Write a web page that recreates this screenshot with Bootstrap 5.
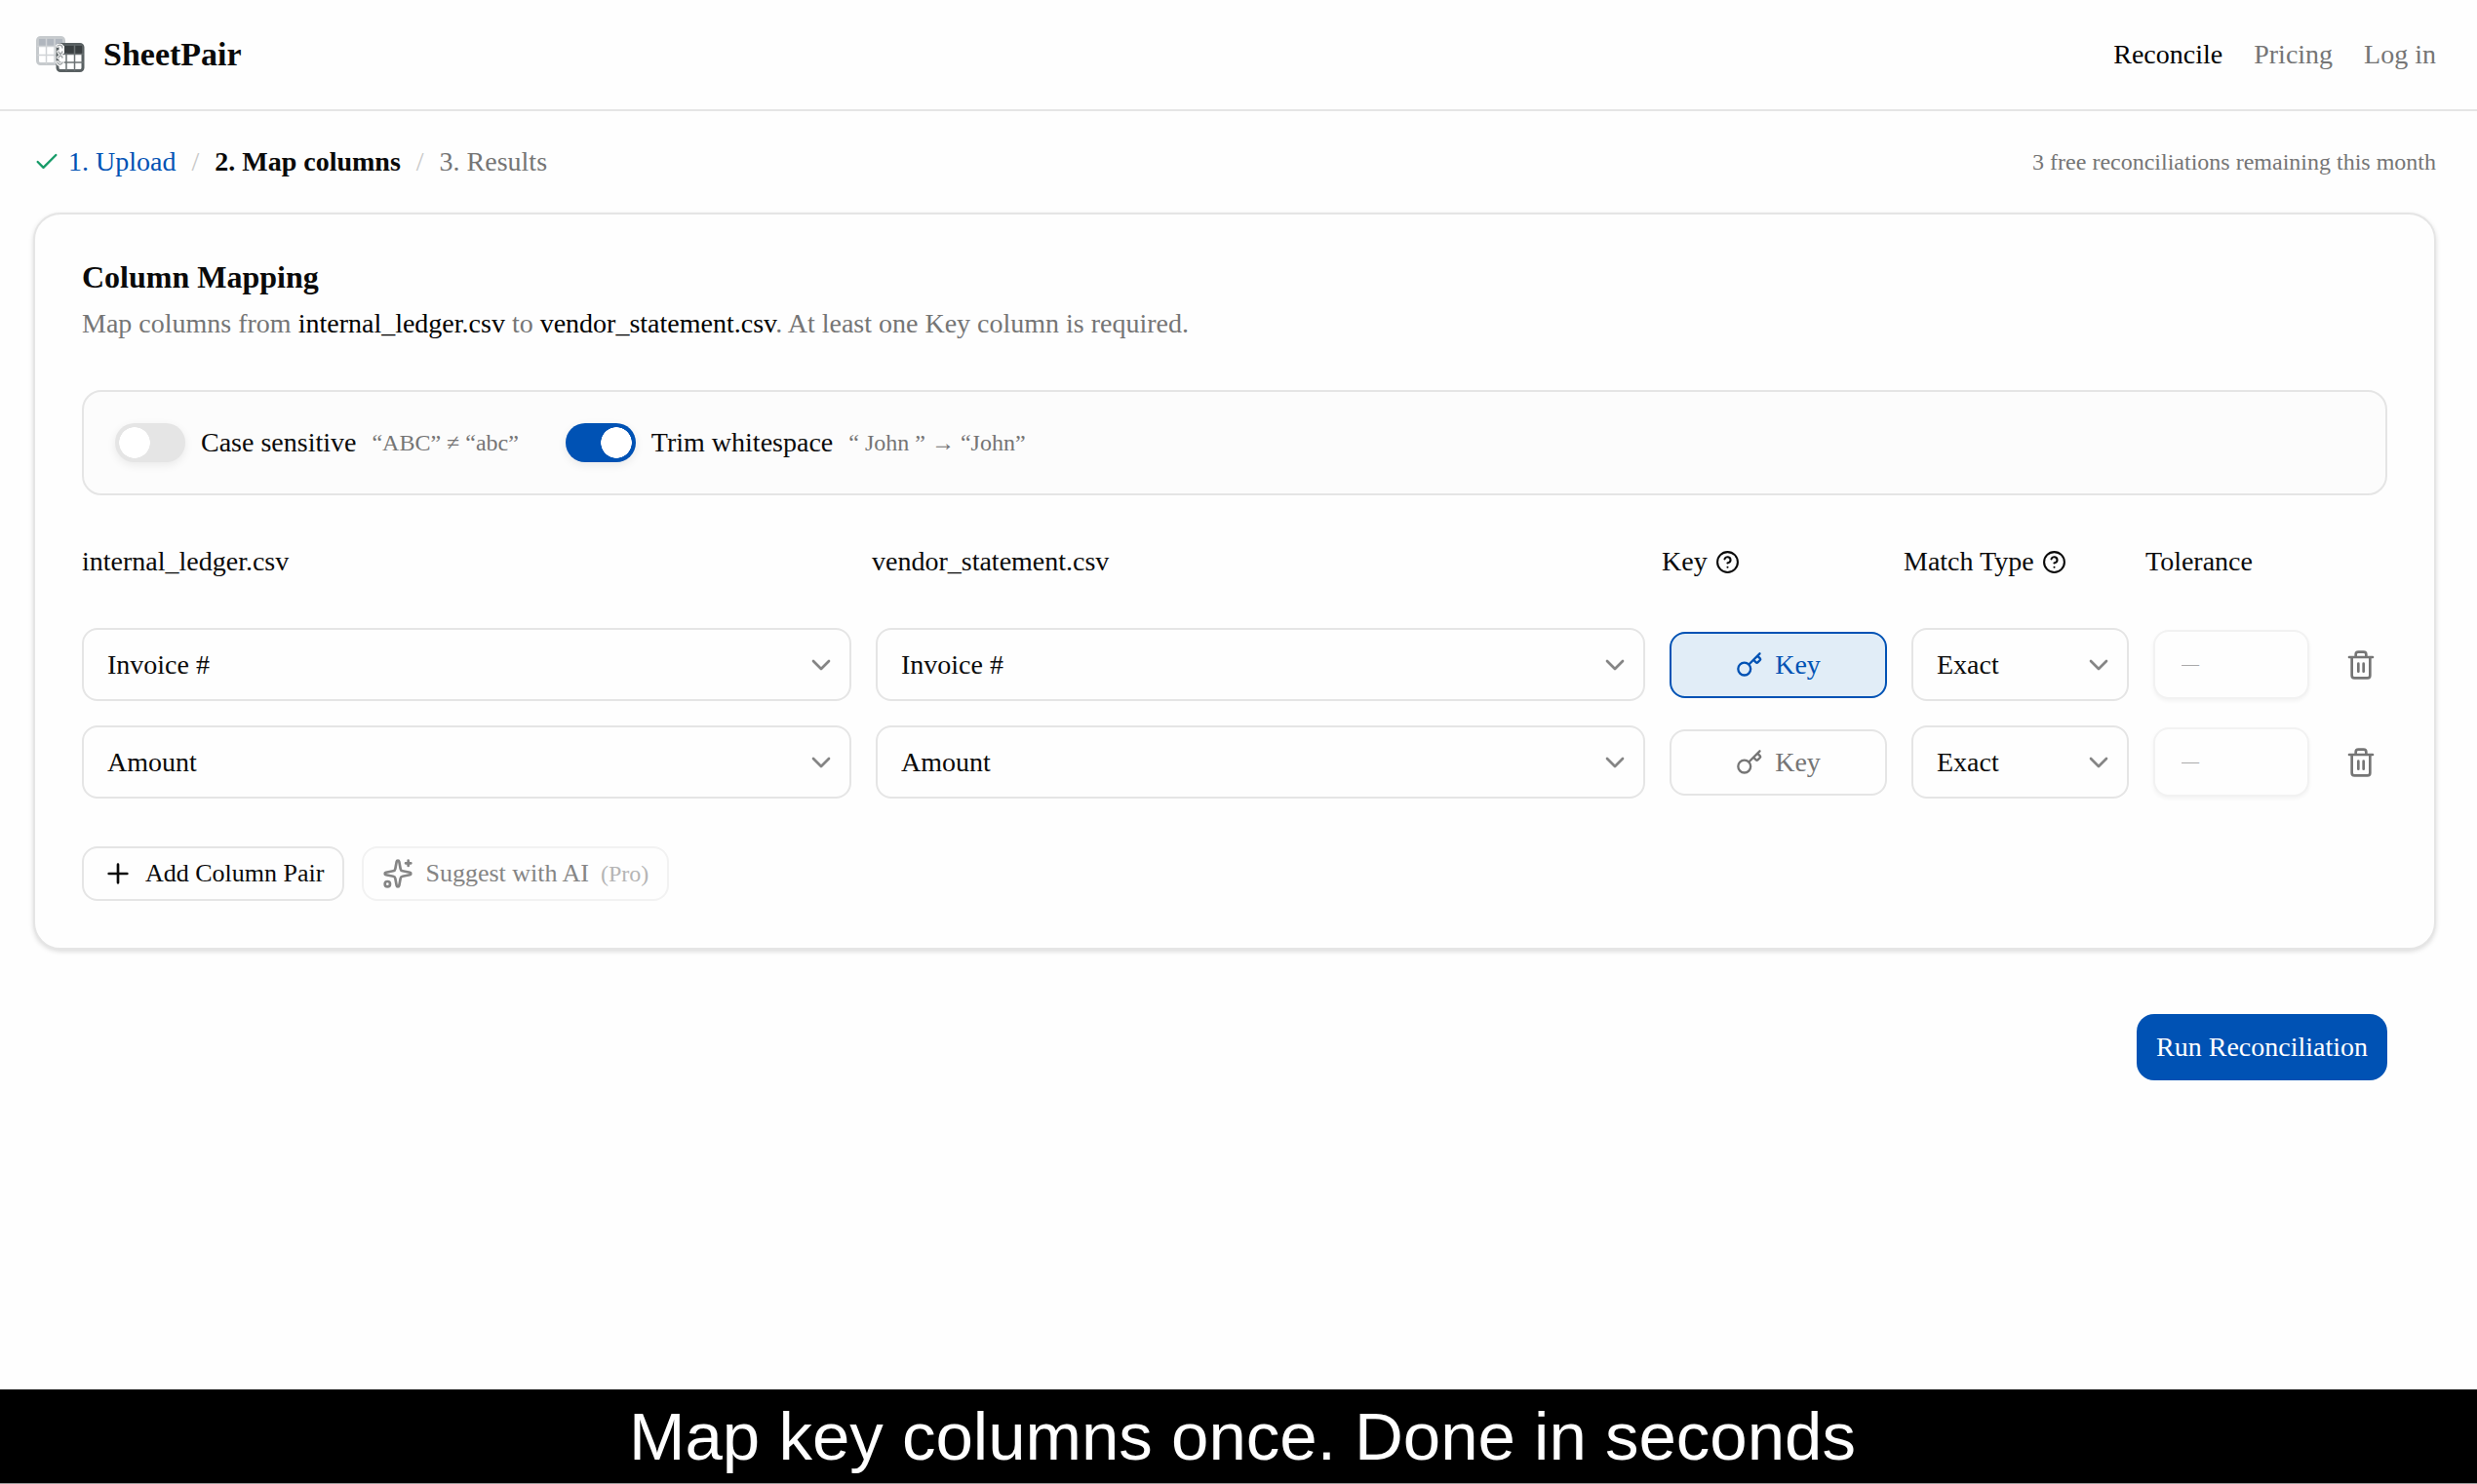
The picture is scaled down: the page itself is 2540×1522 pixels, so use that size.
<!DOCTYPE html>
<html lang="en">
<head>
<meta charset="utf-8">
<meta name="viewport" content="width=device-width, initial-scale=1">
<title>SheetPair – Map columns</title>
<link href="https://cdn.jsdelivr.net/npm/bootstrap@5.3.0/dist/css/bootstrap.min.css" rel="stylesheet">
<style>
:root{--ink:#0a0a0a;--muted:#757575;--line:#e5e5e5;--brand:#0052b4;}
body{font-family:"Liberation Serif",serif;font-size:28px;line-height:40px;color:var(--ink);background:#fefefe;min-height:100vh;}
svg{fill:none;stroke:currentColor;stroke-width:2;stroke-linecap:round;stroke-linejoin:round;flex:none;}
.ic-lg{width:32px;height:32px;}
.ic-md{width:28px;height:28px;}
.text-soft{color:var(--muted);}
.text-link{color:var(--brand);}
.tick{color:#169b68;}
.fine{font-size:24px;}
.site-bar{height:114px;padding:0 42px 0 36px;border-bottom:2px solid var(--line);}
.logo{width:52px;height:40px;}
.brand-name{font-size:34px;font-weight:700;color:var(--ink);text-decoration:none;gap:18px;}
.site-links{gap:32px;}
.site-links a,.steps a{text-decoration:none;}
.page{padding:32px 42px 0 34px;}
.steps{gap:16px;}
.slash{color:#c8c8c8;}
.panel{margin-top:32px;border:2px solid var(--line);border-radius:28px;padding:44px 48px 48px;background:#fefefe;box-shadow:0 2px 5px rgba(0,0,0,.14);}
.panel h1{font-size:32px;line-height:40px;font-weight:700;}
.options{margin-top:48px;height:108px;padding:0 32px;gap:48px;border:2px solid var(--line);border-radius:20px;background:#fcfcfc;}
.form-check.opt{gap:16px;padding:0;margin:0;min-height:0;}
.opt .form-check-input{width:72px;height:40px;margin:0;float:none;border:0;background-color:#e5e5e5;background-size:32px 32px;background-repeat:no-repeat;background-position:4px center;background-image:radial-gradient(circle,#fff 15.5px,transparent 16px);box-shadow:0 3px 10px rgba(0,0,0,.08);}
.opt .form-check-input:checked{background-color:var(--brand);background-position:36px center;}
.grid-line{display:grid;column-gap:25px;align-items:center;grid-template-columns:minmax(0,1fr) minmax(0,1fr) 223px 223px 160px 55px;}
.grid-head{margin-top:48px;margin-bottom:48px;grid-template-columns:minmax(0,1fr) minmax(0,1fr) 223px 223px 160px 63px;}
.pairs{gap:25px;}
.help{width:25px;height:25px;}
.form-select.pick{height:75px;padding:0 60px 0 24px;font-size:28px;line-height:40px;color:var(--ink);border:2px solid var(--line);border-radius:16px;background-color:#fefefe;background-size:32px 32px;background-position:right 13px center;background-image:url("data:image/svg+xml,%3Csvg xmlns='http://www.w3.org/2000/svg' viewBox='0 0 24 24' fill='none' stroke='%23858585' stroke-width='2' stroke-linecap='round' stroke-linejoin='round'%3E%3Cpath d='m6 9 6 6 6-6'/%3E%3C/svg%3E");}
.btn.box{font-size:28px;line-height:40px;border:2px solid var(--line);border-radius:16px;background:#fefefe;color:var(--ink);padding:0;}
.btn.key{height:68px;gap:12px;color:var(--muted);}
.btn.key.on{background:#e1edf7;border-color:var(--brand);color:var(--brand);}
.form-control.tol{height:71px;padding:0 27px;font-size:18px;border:2px solid #f2f2f2;border-radius:16px;background:#fefefe;box-shadow:0 2px 4px rgba(0,0,0,.05);}
.form-control.tol::placeholder{color:#aaa;}
.btn.bin{color:var(--muted);padding:0;border:0;line-height:1;}
.actions{margin-top:49px;gap:18px;}
.btn.box.small-act{height:56px;font-size:26px;padding:0 19px;gap:12px;}
.btn.box.ai{opacity:1;color:#858585;border-color:#f2f2f2;}
.pro{color:#b5b5b5;}
.run-row{padding:66px 50px 0 0;}
.btn.run{height:68px;padding:0 20px;border:0;border-radius:18px;background:var(--brand);color:#fff;font-size:28px;line-height:40px;}
.caption-bar{height:97px;padding:2px 0 0 8px;background:#000;color:#fff;border-bottom:1px solid #9a9a9a;font-family:"Liberation Sans",sans-serif;font-size:69px;line-height:94px;}
</style>
</head>
<body class="d-flex flex-column">
<header class="site-bar navbar flex-nowrap justify-content-between">
  <a href="#" class="brand-name d-flex align-items-center">
    <svg class="logo" viewBox="0 0 52 40" aria-hidden="true">
      <rect x="2.500" y="2.500" width="27" height="27" rx="3" fill="#fff" stroke="#c6cacd" stroke-width="3"/>
      <path d="M4 4h24v7H4z" fill="#b0b6be" stroke="none"/>
      <path d="M3 11.500h26M3 20.500h26M11.500 4v25M20 4v25" stroke="#d0d3d6" stroke-width="1.500"/>
      <rect x="23" y="9.500" width="26" height="27" rx="3" fill="#fff" stroke="#596062" stroke-width="3"/>
      <path d="M30 11h18v8H30z" fill="#3a3f41" stroke="none"/>
      <path d="M24 19.500h25M24 28h25M32 19v17M40.500 11v25" stroke="#6b7173" stroke-width="1.500"/>
      <path d="M23 11c3-2 5 0 5 2M23 28c1 3 4 3 5 0M24 17l4 6M28 17l-4 6" stroke="#fff" stroke-width="3.500"/>
      <path d="M23 11c3-2 5 0 5 2M23 28c1 3 4 3 5 0M24 17l4 6M28 17l-4 6" stroke="#a4a8aa" stroke-width="1.500"/>
    </svg>
    <span>SheetPair</span>
  </a>
  <nav class="site-links d-flex">
    <a href="#" class="text-black">Reconcile</a>
    <a href="#" class="text-soft">Pricing</a>
    <a href="#" class="text-soft">Log in</a>
  </nav>
</header>

<main class="page flex-grow-1">
  <div class="d-flex justify-content-between align-items-center">
    <nav class="steps d-flex align-items-center" aria-label="Progress">
      <a href="#" class="text-link d-flex align-items-center gap-2">
        <svg class="ic-md tick" viewBox="0 0 24 24" aria-hidden="true"><path d="M20 6 9 17l-5-5"/></svg>
        <span>1. Upload</span>
      </a>
      <span class="slash">/</span>
      <strong>2. Map columns</strong>
      <span class="slash">/</span>
      <span class="text-soft">3. Results</span>
    </nav>
    <span class="fine text-soft">3 free reconciliations remaining this month</span>
  </div>

  <section class="panel">
    <h1 class="mb-2">Column Mapping</h1>
    <p class="mb-0 text-soft">Map columns from <span class="text-black">internal_ledger.csv</span> to <span class="text-black">vendor_statement.csv</span>. At least one Key column is required.</p>

    <div class="options d-flex align-items-center">
      <div class="form-check form-switch opt d-flex align-items-center">
        <input class="form-check-input" type="checkbox" role="switch" id="case">
        <label for="case">Case sensitive</label>
        <span class="fine text-soft">“ABC” ≠ “abc”</span>
      </div>
      <div class="form-check form-switch opt d-flex align-items-center">
        <input class="form-check-input" type="checkbox" role="switch" id="trim" checked>
        <label for="trim">Trim whitespace</label>
        <span class="fine text-soft">“ John ” → “John”</span>
      </div>
    </div>

    <div class="grid-line grid-head">
      <span>internal_ledger.csv</span>
      <span>vendor_statement.csv</span>
      <span class="d-flex align-items-center gap-2">Key
        <svg class="help" viewBox="0 0 24 24" aria-hidden="true"><circle cx="12" cy="12" r="10"/><path d="M9.090 9a3 3 0 0 1 5.830 1c0 2-3 3-3 3M12 17h.010"/></svg></span>
      <span class="d-flex align-items-center gap-2">Match Type
        <svg class="help" viewBox="0 0 24 24" aria-hidden="true"><circle cx="12" cy="12" r="10"/><path d="M9.090 9a3 3 0 0 1 5.830 1c0 2-3 3-3 3M12 17h.010"/></svg></span>
      <span>Tolerance</span>
    </div>

    <div class="pairs d-flex flex-column">
      <div class="grid-line">
        <select class="form-select pick" aria-label="Ledger column 1"><option>Invoice #</option><option>Amount</option></select>
        <select class="form-select pick" aria-label="Statement column 1"><option>Invoice #</option><option>Amount</option></select>
        <button type="button" class="btn box key on d-flex align-items-center justify-content-center" aria-pressed="true">
          <svg class="ic-md" viewBox="0 0 24 24" aria-hidden="true"><path d="m15.500 7.500 2.300 2.300a1 1 0 0 0 1.400 0l2.100-2.100a1 1 0 0 0 0-1.400L19 4M21 2l-9.600 9.600"/><circle cx="7.500" cy="15.500" r="5.500"/></svg>Key</button>
        <select class="form-select pick" aria-label="Match type 1"><option>Exact</option></select>
        <input class="form-control tol" type="text" placeholder="—" aria-label="Tolerance 1" disabled>
        <button type="button" class="btn bin" aria-label="Remove pair 1"><svg class="ic-lg" viewBox="0 0 24 24"><path d="M3 6h18M19 6v14a2 2 0 0 1-2 2H7a2 2 0 0 1-2-2V6M8 6V4a2 2 0 0 1 2-2h4a2 2 0 0 1 2 2v2M10 11v6M14 11v6"/></svg></button>
      </div>
      <div class="grid-line">
        <select class="form-select pick" aria-label="Ledger column 2"><option>Amount</option><option>Invoice #</option></select>
        <select class="form-select pick" aria-label="Statement column 2"><option>Amount</option><option>Invoice #</option></select>
        <button type="button" class="btn box key d-flex align-items-center justify-content-center" aria-pressed="false">
          <svg class="ic-md" viewBox="0 0 24 24" aria-hidden="true"><path d="m15.500 7.500 2.300 2.300a1 1 0 0 0 1.400 0l2.100-2.100a1 1 0 0 0 0-1.400L19 4M21 2l-9.600 9.600"/><circle cx="7.500" cy="15.500" r="5.500"/></svg>Key</button>
        <select class="form-select pick" aria-label="Match type 2"><option>Exact</option></select>
        <input class="form-control tol" type="text" placeholder="—" aria-label="Tolerance 2" disabled>
        <button type="button" class="btn bin" aria-label="Remove pair 2"><svg class="ic-lg" viewBox="0 0 24 24"><path d="M3 6h18M19 6v14a2 2 0 0 1-2 2H7a2 2 0 0 1-2-2V6M8 6V4a2 2 0 0 1 2-2h4a2 2 0 0 1 2 2v2M10 11v6M14 11v6"/></svg></button>
      </div>
    </div>

    <div class="actions d-flex">
      <button type="button" class="btn box small-act d-flex align-items-center">
        <svg class="ic-lg" viewBox="0 0 24 24" aria-hidden="true"><path d="M5 12h14M12 5v14"/></svg>Add Column Pair</button>
      <button type="button" class="btn box small-act ai d-flex align-items-center" disabled>
        <svg class="ic-lg" viewBox="0 0 24 24" aria-hidden="true"><path d="M11.017 2.814a1 1 0 0 1 1.966 0l1.051 5.558a2 2 0 0 0 1.594 1.594l5.558 1.051a1 1 0 0 1 0 1.966l-5.558 1.051a2 2 0 0 0-1.594 1.594l-1.051 5.558a1 1 0 0 1-1.966 0l-1.051-5.558a2 2 0 0 0-1.594-1.594l-5.558-1.051a1 1 0 0 1 0-1.966l5.558-1.051a2 2 0 0 0 1.594-1.594zM20 2v4M22 4h-4"/><circle cx="4" cy="20" r="2"/></svg>Suggest with AI <span class="fine pro">(Pro)</span></button>
    </div>
  </section>

  <div class="run-row d-flex justify-content-end">
    <button type="button" class="btn run">Run Reconciliation</button>
  </div>
</main>

<footer class="caption-bar text-center">Map key columns once. Done in seconds</footer>
<script src="https://cdn.jsdelivr.net/npm/bootstrap@5.3.0/dist/js/bootstrap.bundle.min.js"></script>
</body>
</html>
